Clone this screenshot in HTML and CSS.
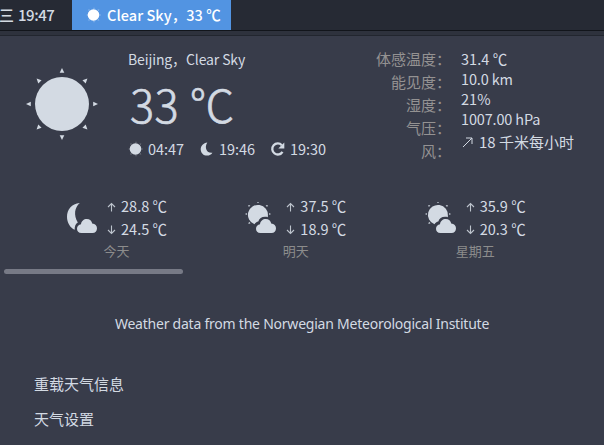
FILE: index.html
```html
<!DOCTYPE html>
<html lang="zh-CN">
<head>
<meta charset="utf-8">
<title>天气</title>
<link rel="stylesheet" href="styles.css">
</head>
<body>
<svg class="defs" width="0" height="0" aria-hidden="true">
  <symbol id="sun" viewBox="0 0 72 72">
    <circle cx="36" cy="36" r="27"/>
    <g id="rays"><path id="ray" d="M36 0l2.3 4.8h-4.6z"/>
    <use href="#ray" transform="rotate(45 36 36)"/><use href="#ray" transform="rotate(90 36 36)"/><use href="#ray" transform="rotate(135 36 36)"/><use href="#ray" transform="rotate(180 36 36)"/><use href="#ray" transform="rotate(225 36 36)"/><use href="#ray" transform="rotate(270 36 36)"/><use href="#ray" transform="rotate(315 36 36)"/></g>
  </symbol>
  <symbol id="small-sun" viewBox="0 0 16 16">
    <circle cx="7.500" cy="8" r="5.800"/>
    <g opacity=".3"><path d="M8 .3l1 1.5H7zM8 15.7l1-1.5H7zM.3 8l1.5-1v2zM15.2 8l-1.5-1v2zM2.2 2.2l2 .5-1.5 1.5zM13.3 2.2l-2 .5 1.5 1.5zM2.2 13.8l2-.5-1.5-1.5zM13.3 13.8l-2-.5 1.5-1.5z"/></g>
  </symbol>
  <symbol id="cloud" viewBox="0 0 20 14">
    <path d="M4.4 14C1.6 14 0 12.200 0 9.800C0 7.300 1.800 5.500 4 5.200C4.400 2 6.800 0 9.800 0C12.800 0 14.800 1.800 15.200 4.500C18.200 4.700 20 6.700 20 9.300C20 12.200 18.200 14 15.500 14Z"/>
  </symbol>
  <symbol id="cloudy-night" viewBox="0 0 32 32">
    <path d="M13.800 1C5.500 1.500 1 8 1 14.800C1 20.800 4.300 25.900 8.700 27.800C8.600 24.500 9.300 21.900 11.800 20.400C7.500 13 8.500 5.500 13.800 1Z"/>
    <use href="#cloud" x="11" y="17" width="20" height="14"/>
  </symbol>
  <symbol id="cloudy-day" viewBox="0 0 32 32">
    <path d="M22.900 13.700A10 10 0 1 0 9.500 22.300C10.200 20.800 11.700 19.800 13.300 19.500C14.200 16.600 16.500 14.800 20 14.800C21 14.800 22 14.900 22.800 15.200Z"/>
    <g><path d="M13 -1l1 1.800h-2zM0 12l1.800-1v2zM26 12l-1.800-1v2zM3.200 2.900l2.200.6-1.600 1.600zM22.800 2.900l-2.200.6 1.600 1.600zM3.400 21.900l2.200-.6-1.600-1.600z"/></g>
    <use href="#cloud" x="11" y="17" width="20" height="14"/>
  </symbol>
</svg>
<header class="panel">
  <div class="clock"><span class="day">三</span><span class="clock-time">19:47</span></div>
  <div class="indicator"><svg class="icon"><use href="#small-sun"/></svg><span>Clear Sky，33 ℃</span></div>
</header>
<main class="menu">
  <section class="current">
    <svg class="big-sun"><use href="#sun"/></svg>
    <div class="summary">
      <div class="place">Beijing，Clear Sky</div>
      <div class="temperature">33 ℃</div>
      <div class="times">
        <span class="time"><svg class="icon"><use href="#small-sun"/></svg>04:47</span>
        <span class="time"><svg class="icon" viewBox="0 0 16 16"><path d="M8.300 1.500C4.500 2 1.700 4.700 1.700 8.200C1.700 12 4.500 14.600 8 14.600C10.500 14.600 12.400 13.400 13.400 11.700C8.500 12.800 4.700 7 8.300 1.500Z"/></svg>19:46</span>
        <span class="time"><svg class="icon" viewBox="0 0 16 16"><path class="reload-ring" d="M11.800 4.200A5.500 5.500 0 1 0 12.500 10.800"/><path d="M14.300 1.400v6H8.300z"/></svg>19:30</span>
      </div>
    </div>
    <div class="labels"><span>体感温度：</span><span>能见度：</span><span>湿度：</span><span>气压：</span><span>风：</span></div>
    <div class="values"><span>31.4 ℃</span><span>10.0 km</span><span>21%</span><span>1007.00 hPa</span><span class="wind"><svg class="wind-arrow" viewBox="0 0 14 16"><path d="M2 13L11 4M5 4h6v6"/></svg>18 千米每小时</span></div>
  </section>
  <section class="forecast">
    <div class="forecast-day"><svg class="weather"><use href="#cloudy-night"/></svg><div class="range"><span><svg class="trend" viewBox="0 0 9 10"><path d="M4.500 9.500V1.500M1 5l3.500-3.500L8 5"/></svg>28.8 ℃</span><span><svg class="trend" viewBox="0 0 9 10"><path d="M4.500 .5v8M1 5l3.500 3.500L8 5"/></svg>24.5 ℃</span></div><div class="name">今天</div></div>
    <div class="forecast-day"><svg class="weather"><use href="#cloudy-day"/></svg><div class="range"><span><svg class="trend" viewBox="0 0 9 10"><path d="M4.500 9.500V1.500M1 5l3.500-3.500L8 5"/></svg>37.5 ℃</span><span><svg class="trend" viewBox="0 0 9 10"><path d="M4.500 .5v8M1 5l3.500 3.500L8 5"/></svg>18.9 ℃</span></div><div class="name">明天</div></div>
    <div class="forecast-day"><svg class="weather"><use href="#cloudy-day"/></svg><div class="range"><span><svg class="trend" viewBox="0 0 9 10"><path d="M4.500 9.500V1.500M1 5l3.500-3.500L8 5"/></svg>35.9 ℃</span><span><svg class="trend" viewBox="0 0 9 10"><path d="M4.500 .5v8M1 5l3.500 3.500L8 5"/></svg>20.3 ℃</span></div><div class="name">星期五</div></div>
  </section>
  <div class="scrollbar"></div>
  <div class="credit">Weather data from the Norwegian Meteorological Institute</div>
  <nav class="actions"><div>重载天气信息</div><div>天气设置</div></nav>
</main>
</body>
</html>
```
FILE: styles.css
```css
* { box-sizing: border-box; }
body { margin: 0; width: 604px; height: 445px; overflow: hidden; background: #383c4a; color: #d3dae3; font: 15px/20px "Noto Sans CJK SC", "Noto Sans", sans-serif; display: flex; flex-direction: column; }
body, header, main, section, nav, div { white-space: nowrap; }
svg { display: block; flex: none; overflow: visible; fill: currentColor; }
.defs { position: absolute; }
.panel { height: 31px; flex: none; display: flex; background: #262a34; border-bottom: 1px solid #12151b; font-weight: 500; }
.clock { width: 72px; display: flex; line-height: 30px; letter-spacing: -.45px; }
.day { width: 18px; margin-left: -1px; flex: none; }
.clock-time { margin-left: 1px; }
.indicator { width: 159px; display: flex; align-items: center; background: #5294e2; color: #fff; padding-left: 14px; gap: 5px; line-height: 30px; font-size: 14.5px; letter-spacing: .05px; }
.icon { width: 16px; height: 16px; }
.menu { flex: 1; border-top: 4px solid #2e323d; box-shadow: inset 0 1px #22262f; }
.current { height: 157px; display: grid; grid-template-columns: 26px 72px 30px 219px 104px 10px 1fr; }
.big-sun { grid-column: 2; width: 72px; height: 72px; margin-top: 33px; }
.summary { grid-column: 4; padding-top: 14px; }
.place { font-size: 14px; letter-spacing: -.12px; }
.temperature { font-size: 45px; line-height: 60px; margin-top: 5px; font-weight: 300; padding-left: 2px; letter-spacing: .5px; -webkit-text-stroke: .7px currentColor; }
.times { display: flex; gap: 15px; margin-top: 4px; }
.time { display: flex; align-items: center; gap: 4px; line-height: 22px; font-size: 14.5px; letter-spacing: -.05px; }
.reload-ring { fill: none; stroke: currentColor; stroke-width: 2.3; }
.labels { grid-column: 5; display: flex; flex-direction: column; align-items: flex-end; padding-top: 12px; color: #949292; line-height: 23px; }
.values { grid-column: 7; display: flex; flex-direction: column; padding-top: 14px; line-height: 20px; font-size: 14.5px; letter-spacing: .05px; }
.values span:nth-child(2), .values span:nth-child(4) { letter-spacing: -.15px; }
.values .wind { display: flex; align-items: center; gap: 4px; line-height: 26px; font-size: 15px; letter-spacing: 0; }
.wind-arrow { width: 14px; height: 16px; fill: none; stroke: currentColor; }
.forecast { height: 77px; display: flex; padding: 2px 0 0 66px; }
.forecast-day { width: 180px; display: grid; grid-template-columns: 32px 61px; column-gap: 8px; grid-template-rows: 47px 20px; align-content: start; }
.weather { width: 32px; height: 32px; margin-top: 8px; }
.range { display: flex; flex-direction: column; line-height: 23px; font-size: 14.5px; letter-spacing: .02px; }
.range span { display: flex; align-items: center; }
.trend { width: 9px; height: 10px; margin: 2px 5px 0 1px; fill: none; stroke: currentColor; stroke-width: 1.1; opacity: .85; }
.name { grid-column: 1 / 3; text-align: center; color: #8c8c8c; font-size: 13px; line-height: 20px; }
.scrollbar { width: 179px; height: 5px; margin-left: 4px; border-radius: 3px; background: #777a86; }
.credit { text-align: center; margin-top: 40px; font-family: "Noto Sans", sans-serif; font-size: 14px; letter-spacing: -.23px; }
.actions { padding: 32px 0 0 34px; line-height: 35px; }
```
